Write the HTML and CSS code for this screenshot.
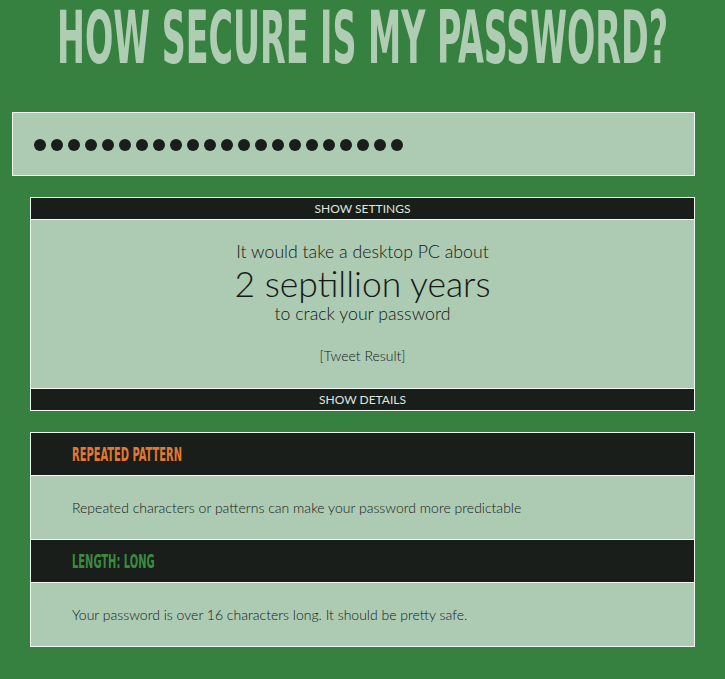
FILE: index.html
```html
<!DOCTYPE html>
<html>
<head>
<meta charset="utf-8">
<link rel="stylesheet" href="styles.css">
</head>
<body>
<h1 class="title-row">
  <svg class="title" width="725" height="112" viewBox="0 0 725 112">
    <text x="362.5" y="63" text-anchor="middle" textLength="611" lengthAdjust="spacingAndGlyphs">HOW SECURE IS MY PASSWORD?</text>
  </svg>
</h1>
<div class="pw-box">
  <div class="dots">
    <span></span><span></span><span></span><span></span><span></span><span></span><span></span><span></span><span></span><span></span><span></span>
    <span></span><span></span><span></span><span></span><span></span><span></span><span></span><span></span><span></span><span></span><span></span>
  </div>
</div>
<div class="results">
  <div class="bar">SHOW SETTINGS</div>
  <div class="result-body">
    <div class="line first">It would take a desktop PC about</div>
    <div class="time">2 septillion years</div>
    <div class="line second">to crack your password</div>
    <div class="tweet">[Tweet Result]</div>
  </div>
  <div class="bar">SHOW DETAILS</div>
</div>
<div class="details">
  <div class="d-head warn"><span class="d-title">REPEATED PATTERN</span></div>
  <div class="d-body">Repeated characters or patterns can make your password more predictable</div>
  <div class="d-head good"><span class="d-title">LENGTH: LONG</span></div>
  <div class="d-body">Your password is over 16 characters long. It should be pretty safe.</div>
</div>
</body>
</html>
```
FILE: styles.css
```css
html, body {
  margin: 0;
  padding: 0;
}
body {
  background: #378140;
  font-family: Lato, "Noto Sans", sans-serif;
  height: 679px;
  overflow: hidden;
}
.title-row {
  margin: 0;
  height: 112px;
  font-size: 0;
  line-height: 0;
}
.title {
  display: block;
}
.title text {
  font-family: "DejaVu Sans Condensed", "DejaVu Sans", sans-serif;
  font-weight: bold;
  font-size: 73px;
  fill: #afcdb3;
}
.pw-box {
  margin: 0 30px 0 12px;
  height: 64px;
  box-sizing: border-box;
  border: 1px solid #f2f7f2;
  background: #adcbb2;
  display: flex;
  align-items: center;
  padding-left: 21px;
}
.dots {
  display: flex;
  gap: 5px;
  padding-top: 1px;
}
.dots span {
  width: 12px;
  height: 12px;
  border-radius: 50%;
  background: #1a1e1b;
}
.results {
  margin: 21px 30px 0 30px;
  border: 1px solid #f2f7f2;
  background: #adcbb2;
}
.bar {
  background: #1a1e1b;
  color: #dfe6df;
  font-size: 12px;
  text-align: center;
  height: 21px;
  line-height: 22px;
}
.result-body {
  border-top: 1px solid #f2f7f2;
  border-bottom: 1px solid #f2f7f2;
  height: 170px;
  box-sizing: border-box;
  text-align: center;
  color: #141816;
  font-weight: 300;
  padding-top: 21px;
}
.line {
  font-size: 17.7px;
}
.line.first {
  line-height: 22px;
}
.time {
  font-size: 35.5px;
  line-height: 40px;
  margin-top: 1px;
}
.line.second {
  line-height: 20px;
}
.tweet {
  font-size: 14px;
  line-height: 18px;
  margin-top: 23px;
}
.details {
  margin: 21px 30px 0 30px;
  border: 1px solid #f2f7f2;
  background: #adcbb2;
}
.d-head {
  background: #1a1e1b;
  height: 42px;
  line-height: 42px;
  padding-left: 41px;
  border-bottom: 1px solid #f2f7f2;
}
.d-title {
  display: inline-block;
  font-family: "DejaVu Sans Condensed", "DejaVu Sans", sans-serif;
  font-weight: bold;
  font-size: 19px;
  white-space: nowrap;
  transform: scaleX(0.58);
  transform-origin: left center;
}
.d-head.warn { color: #e07a32; }
.d-head.good { color: #3a8a41; }
.d-body {
  height: 63px;
  line-height: 64px;
  padding-left: 41px;
  font-size: 14px;
  color: #141816;
  font-weight: 300;
}
.d-body + .d-head {
  border-top: 1px solid #f2f7f2;
}
```
